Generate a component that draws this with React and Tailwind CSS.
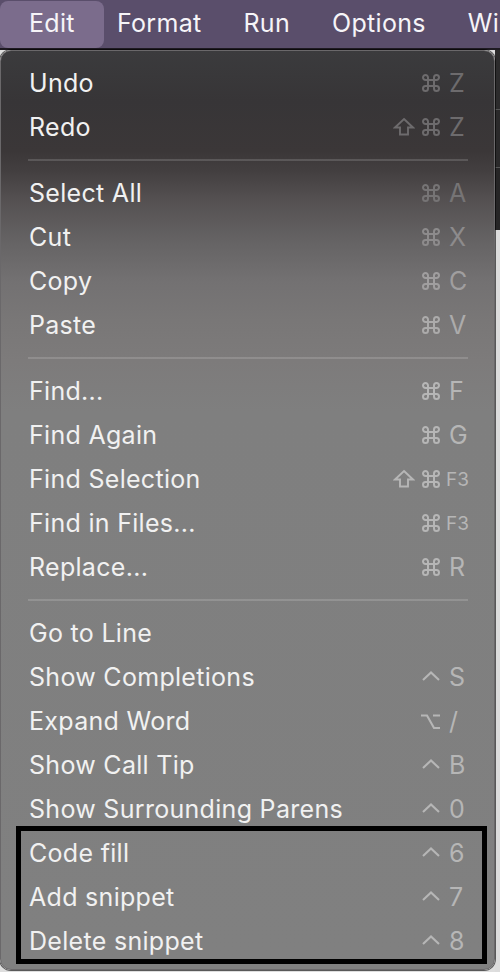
import React from "react";

const font = { fontFamily: "Inter, 'Noto Sans', sans-serif" };

function Cmd({ c }) {
  return (
    <svg width="20" height="20" viewBox="0 0 20 20" fill="none" stroke={c} strokeWidth="2">
      <path d="M7 7 V4.5 A2.5 2.5 0 1 0 4.5 7 H15.5 A2.5 2.5 0 1 0 13 4.5 V15.5 A2.5 2.5 0 1 0 15.5 13 H4.5 A2.5 2.5 0 1 0 7 15.5 V7" />
    </svg>
  );
}
function Shift({ c }) {
  return (
    <svg width="22" height="20" viewBox="0 0 22 20" fill="none" stroke={c} strokeWidth="1.9" strokeLinejoin="miter" className="mr-[6px]">
      <path d="M11 2 L20 10.5 H15 V17.5 H7 V10.5 H2 Z" />
    </svg>
  );
}
function Ctrl({ c }) {
  return (
    <svg width="20" height="20" viewBox="0 0 20 20" fill="none" stroke={c} strokeWidth="2.1">
      <path d="M2 13 L10 5.5 L18 13" />
    </svg>
  );
}
function Opt({ c }) {
  return (
    <svg width="21" height="20" viewBox="0 0 21 20" fill="none" stroke={c} strokeWidth="2.1">
      <path d="M1 4.5 H7 L14 17 H20 M13 4.5 H20" />
    </svg>
  );
}

function Row({ label, mods = [], k, c, small }) {
  return (
    <div className="h-[44px] flex items-center pl-[28px] pr-[20px]">
      <span className="text-[25px] tracking-[0.3px] text-[#f1f1f1] leading-none flex-1 whitespace-nowrap">{label}</span>
      <div className="flex items-center">
        {mods.map((m, i) => (
          <span key={i} className="flex items-center">
            {m === "shift" && <Shift c={c} />}
            {m === "cmd" && <Cmd c={c} />}
            {m === "ctrl" && <Ctrl c={c} />}
            {m === "opt" && <Opt c={c} />}
          </span>
        ))}
      </div>
      <span
        className={
          "leading-none " + (small ? "text-[19px] ml-[5px] w-[28px]" : "text-[25px] ml-[8px] w-[25px]")
        }
        style={{ color: c }}
      >
        {k}
      </span>
    </div>
  );
}

function Sep() {
  return (
    <div className="h-[22px] flex items-center pl-[27px] pr-[26px]">
      <div className="h-[2px] w-full bg-white/15" />
    </div>
  );
}

export default function App() {
  const top = "#6d6b6d";
  const g = "#b6b6b6";
  return (
    <div className="w-[500px] h-[972px] overflow-hidden relative bg-[#dedede]" style={font}>
      {/* menu bar */}
      <div className="h-[48px] bg-[#5a4e6b] flex items-center text-[25px] tracking-[0.3px] text-[#f6f4f8] whitespace-nowrap overflow-hidden">
        <div className="w-[104px] shrink-0 h-[47px] rounded-[8px] bg-[#7b6c8c] flex items-center pl-[29px]">Edit</div>
        <div className="flex items-center gap-[42px] ml-[13px] shrink-0">
          <span>Format</span>
          <span>Run</span>
          <span>Options</span>
          <span>Wi</span>
        </div>
      </div>
      <div className="h-[2px] bg-[#1e1a22]" />
      {/* content under */}
      <div className="flex h-[922px]">
        <div className="w-[495px] shrink-0 h-[920px] rounded-[11px] border border-[#6a686a] shadow-[0_0_0_1px_rgba(0,0,0,0.6)] bg-[linear-gradient(180deg,#3b3b3d_0px,#373537_50px,#3b3738_100px,#433f40_120px,#555152_150px,#656364_190px,#737172_230px,#797777_270px,#7d7b7b_310px,#7f7f7f_360px,#808080_100%)] pt-[10px] relative">
          <Row label="Undo" mods={["cmd"]} k="Z" c={top} />
          <Row label="Redo" mods={["shift", "cmd"]} k="Z" c={top} />
          <Sep />
          <Row label="Select All" mods={["cmd"]} k="A" c="#767475" />
          <Row label="Cut" mods={["cmd"]} k="X" c="#8d8b8c" />
          <Row label="Copy" mods={["cmd"]} k="C" c="#a09e9f" />
          <Row label="Paste" mods={["cmd"]} k="V" c="#acabab" />
          <Sep />
          <Row label="Find..." mods={["cmd"]} k="F" c={g} />
          <Row label="Find Again" mods={["cmd"]} k="G" c={g} />
          <Row label="Find Selection" mods={["shift", "cmd"]} k="F3" c={g} small />
          <Row label="Find in Files..." mods={["cmd"]} k="F3" c={g} small />
          <Row label="Replace..." mods={["cmd"]} k="R" c={g} />
          <Sep />
          <Row label="Go to Line" c={g} />
          <Row label="Show Completions" mods={["ctrl"]} k="S" c={g} />
          <Row label="Expand Word" mods={["opt"]} k="/" c={g} />
          <Row label="Show Call Tip" mods={["ctrl"]} k="B" c={g} />
          <Row label="Show Surrounding Parens" mods={["ctrl"]} k="0" c={g} />
          <Row label="Code fill" mods={["ctrl"]} k="6" c={g} />
          <Row label="Add snippet" mods={["ctrl"]} k="7" c={g} />
          <Row label="Delete snippet" mods={["ctrl"]} k="8" c={g} />
        </div>
        <div className="flex-1 flex flex-col">
          <div className="h-[60px] bg-[#2c2b2c] border-b border-[#555]" />
          <div className="h-[58px] bg-[#2a292a] border-b border-[#555]" />
          <div className="h-[62px] bg-[#262526]" />
          <div className="flex-1 bg-[#dcdcdc]" />
        </div>
      </div>
      {/* annotation box */}
      <div className="absolute left-[16px] top-[826px] w-[471px] h-[138px] border-[5px] border-black pointer-events-none" />
    </div>
  );
}
